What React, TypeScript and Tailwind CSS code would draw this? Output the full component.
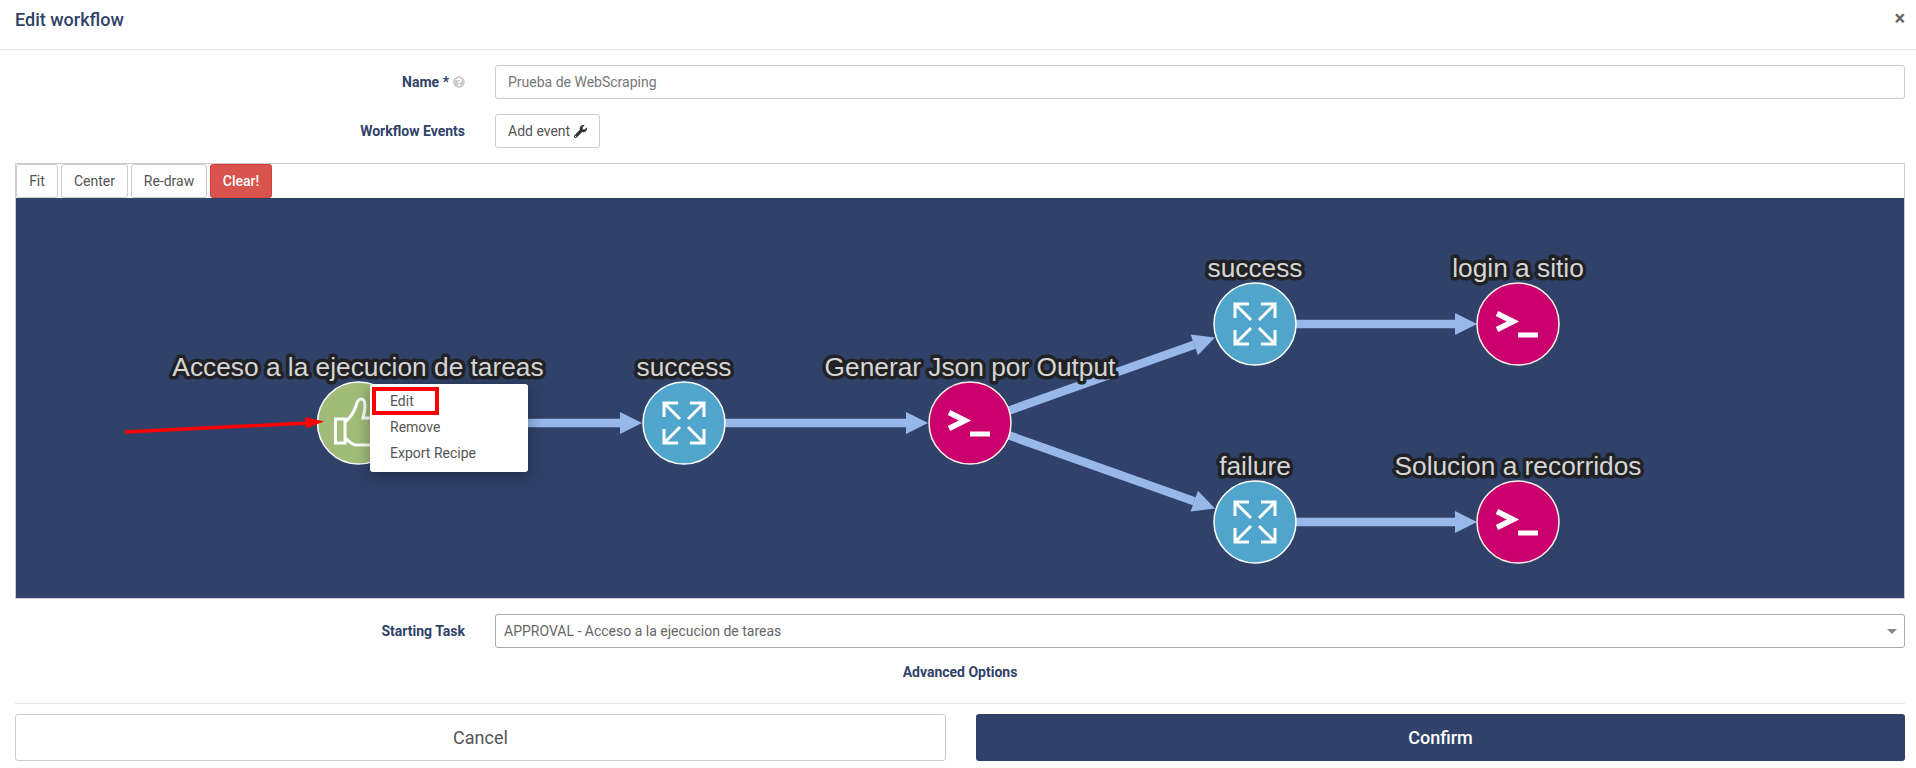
import { FaQuestionCircle, FaWrench } from "react-icons/fa";

const EDGE = "#98b8ea";

function Edge({ x1, y1, x2, y2 }: { x1: number; y1: number; x2: number; y2: number }) {
    const a = Math.atan2(y2 - y1, x2 - x1);
    const ux = Math.cos(a);
    const uy = Math.sin(a);
    const bx = x2 - ux * 22;
    const by = y2 - uy * 22;
    const hw = 11;
    return (
        <g>
            <line x1={x1} y1={y1} x2={bx} y2={by} stroke={EDGE} strokeWidth={8.5} />
            <polygon
                fill={EDGE}
                points={`${x2},${y2} ${bx - uy * hw},${by + ux * hw} ${bx + uy * hw},${by - ux * hw}`}
            />
        </g>
    );
}

function Label({ x, y, text }: { x: number; y: number; text: string }) {
    return (
        <text
            x={x}
            y={y}
            textAnchor="middle"
            fontFamily="'Liberation Sans', Arial, sans-serif"
            fontSize={26.3}
            fill="#d6d6d6"
            stroke="#202226"
            strokeWidth={7}
            strokeLinejoin="round"
            paintOrder="stroke"
        >
            {text}
        </text>
    );
}

function ExpandNode({ cx, cy }: { cx: number; cy: number }) {
    return (
        <g>
            <circle cx={cx} cy={cy} r={41} fill="#4fa5cb" stroke="#fff" strokeWidth={1.5} />
            <g transform={`translate(${cx} ${cy})`} fill="none" stroke="#fff" strokeWidth={3}>
                <path d="M-20 -6V-20H-6M-20 -20L-4 -4" />
                <path d="M20 -6V-20H6M20 -20L4 -4" />
                <path d="M-20 6V20H-6M-20 20L-4 4" />
                <path d="M20 6V20H6M20 20L4 4" />
            </g>
        </g>
    );
}

function TerminalNode({ cx, cy }: { cx: number; cy: number }) {
    return (
        <g>
            <circle cx={cx} cy={cy} r={41} fill="#cb006f" stroke="#fff3e6" strokeWidth={1.5} />
            <g transform={`translate(${cx} ${cy})`} fill="none" stroke="#fff">
                <path d="M-21 -10.5L-5 -2.5L-21 5.5" strokeWidth={5.5} />
                <path d="M0 11H20" strokeWidth={5} />
            </g>
        </g>
    );
}

function WorkflowCanvas() {
    return (
        <div className="relative h-[400px] bg-[#304269]">
            <svg viewBox="16 198 1888 400" className="block w-full h-full">
                <Edge x1={358} y1={423} x2={642} y2={423} />
                <Edge x1={725} y1={423} x2={928} y2={423} />
                <Edge x1={1005} y1={412} x2={1215} y2={337.5} />
                <Edge x1={1005} y1={434} x2={1215} y2={508.5} />
                <Edge x1={1296} y1={324} x2={1477} y2={324} />
                <Edge x1={1296} y1={522} x2={1477} y2={522} />

                <circle cx={358.5} cy={423} r={41} fill="#a1bc78" stroke="#fff" strokeWidth={1.5} />
                <g fill="none" stroke="#fff" strokeWidth={3}>
                    <rect x={335.5} y={419} width={9.5} height={24} />
                    <path d="M345 422C350 418 354 412 356 406C357 402 358 399 361 399C364 399 365 402 365 406C365 410 364 414 363 418H385C390 418 390 426 386 427C390 428 390 435 385 436C388 438 387 445 382 445H356C352 445 349 441 345 438" />
                </g>

                <ExpandNode cx={684} cy={423} />
                <TerminalNode cx={970} cy={423} />
                <ExpandNode cx={1255} cy={324} />
                <TerminalNode cx={1518} cy={324} />
                <ExpandNode cx={1255} cy={522} />
                <TerminalNode cx={1518} cy={522} />

                <Label x={358} y={376} text="Acceso a la ejecucion de tareas" />
                <Label x={684} y={376} text="success" />
                <Label x={970} y={376} text="Generar Json por Output" />
                <Label x={1255} y={277} text="success" />
                <Label x={1518} y={277} text="login a sitio" />
                <Label x={1255} y={475} text="failure" />
                <Label x={1518} y={475} text="Solucion a recorridos" />

                <line x1={125} y1={432} x2={308} y2={423} stroke="#fe0000" strokeWidth={3.5} />
                <polygon points="324,421.5 305,417 306,428.5" fill="#fe0000" />
            </svg>

            <div className="absolute left-[354px] top-[186px] w-[158px] h-[88px] bg-white rounded-[3px] shadow-[0_4px_16px_rgba(0,0,0,0.35)] pt-[4px] text-[14px] text-[#555]">
                <div className="h-[26px] leading-[26px] pl-[20px]">Edit</div>
                <div className="h-[26px] leading-[26px] pl-[20px]">Remove</div>
                <div className="h-[26px] leading-[26px] pl-[20px]">Export Recipe</div>
                <div className="absolute left-[2px] top-[3px] w-[67px] h-[28px] border-[4px] border-[#fe0000]" />
            </div>
        </div>
    );
}

export default function App() {
    const toolButton = "h-[34px] bg-white border border-[#ccc] rounded-[3px] text-[14px] text-[#555]";

    return (
        <div className="w-[1916px] h-[768px] bg-white overflow-hidden font-['Roboto',sans-serif]">
            <header className="h-[50px] border-b border-[#e5e5e5] flex justify-between pl-[15px] pr-[11px]">
                <h4 className="text-[18px] font-medium text-[#304269] leading-[40px]">Edit workflow</h4>
                <span className="text-[20px] font-bold text-[#666] leading-[36px]">×</span>
            </header>

            <div className="pl-[15px] pr-[11px] pt-[15px]">
                <div className="flex items-center gap-[30px] h-[34px]">
                    <label className="w-[450px] text-[14px] font-bold text-[#304269] flex justify-end items-center gap-[4px]">
                        Name * <FaQuestionCircle className="w-[12px] h-[12px] text-[#ccc]" />
                    </label>
                    <div className="flex-1 h-[34px] border border-[#ccc] rounded-[3px] px-[12px] text-[14px] leading-[32px] text-[#777]">
                        Prueba de WebScraping
                    </div>
                </div>

                <div className="flex items-center gap-[30px] h-[34px] mt-[15px]">
                    <label className="w-[450px] text-right text-[14px] font-bold text-[#304269]">Workflow Events</label>
                    <button className="h-[34px] px-[12px] border border-[#ccc] rounded-[3px] text-[14px] text-[#555] flex items-center gap-[4px]">
                        Add event <FaWrench className="w-[13px] h-[13px] text-[#333]" />
                    </button>
                </div>

                <div className="mt-[15px] border border-[#ccc]">
                    <div className="h-[34px] flex gap-[3px]">
                        <button className={`${toolButton} w-[42px]`}>Fit</button>
                        <button className={`${toolButton} w-[67px]`}>Center</button>
                        <button className={`${toolButton} w-[76px]`}>Re-draw</button>
                        <button className="h-[34px] w-[62px] bg-[#d9534f] border border-[#d43f3a] rounded-[3px] text-[14px] font-medium text-white">
                            Clear!
                        </button>
                    </div>
                    <WorkflowCanvas />
                </div>

                <div className="flex items-center gap-[30px] h-[34px] mt-[15px]">
                    <label className="w-[450px] text-right text-[14px] font-bold text-[#304269]">Starting Task</label>
                    <div className="flex-1 h-[34px] border border-[#aaa] rounded-[3px] pl-[8px] pr-[7px] text-[14px] leading-[32px] text-[#666] flex justify-between items-center">
                        APPROVAL - Acceso a la ejecucion de tareas
                        <svg width="10" height="5" viewBox="0 0 10 5" className="mt-[1px]">
                            <path d="M0 0H10L5 5Z" fill="#888" />
                        </svg>
                    </div>
                </div>

                <div className="mt-[15px] text-center text-[14px] font-bold text-[#304269] leading-[18px]">Advanced Options</div>

                <div className="mt-[22px] border-t border-[#e5e5e5]" />

                <div className="mt-[10px] flex gap-[30px]">
                    <button className="flex-1 h-[47px] border border-[#ccc] rounded-[3px] text-[18px] text-[#555]">Cancel</button>
                    <button className="flex-1 h-[47px] rounded-[3px] bg-[#304269] text-[18px] font-medium text-white">Confirm</button>
                </div>
            </div>
        </div>
    );
}
